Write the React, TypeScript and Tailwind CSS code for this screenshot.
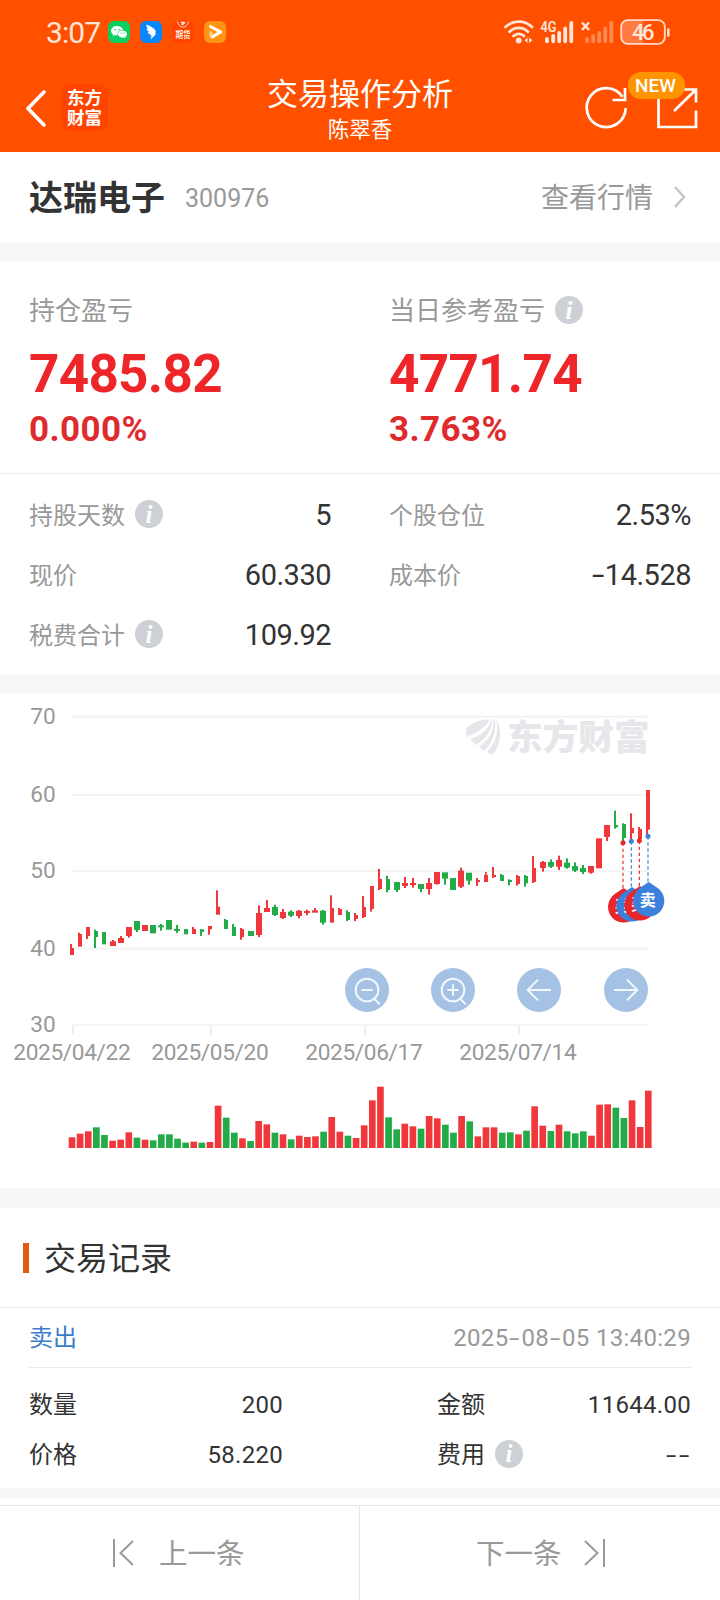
import React from "react";

type Rect = [number, number, number, number];
type Candle = [c: "R" | "G", body: Rect, wick?: Rect];

const RED = "#f0383c";
const GREEN = "#22ab46";

// Candles grouped by chart segment: bodies and wicks are [x1, x2, y1, y2] in third-pixel units.
const segments: { dx: number; dy: number; items: Candle[] }[] = [
  {
    dx: 0,
    dy: 0,
    items: [
      ["R", [210, 222, 774, 795], [210, 216, 762, 780]],
      ["R", [234, 246, 732, 770], [234, 240, 728, 740]],
      ["R", [258, 270, 711, 738], [258, 264, 711, 747]],
      ["G", [282, 294, 723, 741], [282, 288, 719, 774]],
      ["G", [306, 318, 726, 763]],
      ["R", [330, 348, 754, 768], [336, 342, 750, 760]],
      ["R", [354, 372, 744, 759], [360, 366, 738, 750]],
      ["R", [378, 396, 711, 738], [384, 390, 711, 743]],
      ["G", [402, 420, 693, 720], [408, 414, 700, 726]],
      ["R", [426, 444, 705, 723]],
      ["G", [450, 468, 705, 730]],
      ["G", [474, 492, 706, 712], [480, 486, 702, 722]],
      ["G", [498, 516, 690, 719]],
      ["G", [522, 540, 717, 723], [528, 534, 705, 729]],
      ["G", [552, 564, 717, 733]],
      ["R", [576, 588, 717, 732], [576, 582, 711, 720]],
      ["G", [600, 612, 718, 726], [600, 606, 718, 738]],
      ["R", [624, 636, 708, 718], [624, 630, 708, 734]],
      ["R", [648, 660, 650, 674], [648, 654, 601, 660]],
      ["G", [672, 684, 690, 717], [672, 678, 687, 700]],
      ["G", [696, 708, 711, 738], [696, 702, 702, 720]],
      ["R", [720, 732, 717, 741], [720, 726, 714, 749]],
      ["G", [744, 762, 723, 738]],
    ],
  },
  {
    dx: 720,
    dy: 450,
    items: [
      ["R", [48, 66, 219, 285], [54, 60, 196, 291]],
      ["R", [72, 90, 204, 216], [78, 84, 180, 210]],
      ["G", [96, 114, 201, 225], [102, 108, 194, 228]],
      ["R", [120, 138, 216, 234], [126, 132, 207, 237]],
      ["G", [144, 162, 215, 227], [150, 156, 211, 231]],
      ["R", [168, 186, 212, 228], [174, 180, 210, 235]],
      ["R", [192, 210, 213, 219], [198, 204, 209, 226]],
      ["R", [216, 234, 211, 218], [222, 228, 204, 215]],
      ["G", [240, 258, 212, 248], [246, 252, 210, 254]],
      ["R", [270, 282, 204, 248], [270, 276, 166, 210]],
      ["R", [294, 306, 207, 225], [294, 300, 204, 215]],
      ["G", [318, 330, 216, 240], [318, 324, 211, 243]],
      ["R", [342, 354, 225, 237], [342, 348, 219, 243]],
      ["R", [366, 378, 201, 231], [366, 372, 168, 234]],
      ["R", [390, 402, 138, 207], [390, 396, 138, 215]],
      ["R", [414, 426, 117, 147], [414, 420, 87, 150]],
      ["G", [438, 450, 117, 150], [438, 444, 107, 157]],
      ["G", [462, 480, 126, 150], [468, 474, 130, 156]],
      ["R", [486, 504, 129, 138], [492, 498, 111, 144]],
      ["R", [510, 528, 129, 135], [516, 522, 114, 143]],
      ["G", [534, 552, 132, 147], [540, 546, 132, 157]],
      ["R", [558, 576, 129, 147], [564, 570, 114, 164]],
      ["R", [582, 600, 96, 132], [588, 594, 100, 134]],
      ["G", [606, 624, 97, 116], [612, 618, 100, 134]],
      ["G", [630, 648, 114, 150]],
      ["R", [654, 672, 92, 140], [660, 666, 83, 144]],
      ["G", [678, 696, 98, 122], [684, 690, 100, 134]],
      ["R", [708, 720, 120, 126], [708, 714, 114, 138]],
      ["R", [732, 744, 105, 126], [735, 740, 96, 110]],
      ["R", [756, 768, 105, 111], [756, 762, 81, 114]],
    ],
  },
  {
    dx: 1380,
    dy: 0,
    items: [
      ["G", [120, 132, 555, 573], [120, 126, 552, 560]],
      ["G", [144, 156, 570, 576], [144, 150, 568, 586]],
      ["R", [168, 180, 558, 582], [168, 174, 555, 587]],
      ["G", [192, 204, 558, 580], [192, 198, 555, 590]],
      ["R", [216, 228, 534, 576], [216, 222, 498, 579]],
      ["R", [240, 258, 516, 534], [246, 252, 513, 545]],
      ["G", [264, 282, 516, 530], [270, 276, 508, 534]],
      ["R", [288, 306, 510, 530], [294, 300, 497, 540]],
      ["G", [312, 330, 518, 533], [318, 324, 505, 536]],
      ["G", [336, 354, 528, 542], [342, 348, 517, 546]],
      ["G", [360, 378, 534, 546], [366, 372, 525, 552]],
      ["R", [384, 402, 528, 548], [390, 396, 530, 551]],
      ["R", [408, 426, 445, 535]],
      ["R", [432, 450, 405, 441], [438, 444, 410, 453]],
      ["G", [462, 474, 405, 412], [462, 468, 362, 416]],
      ["G", [486, 498, 402, 444], [486, 492, 400, 455]],
      ["R", [510, 522, 414, 430], [510, 516, 370, 452]],
      ["R", [534, 546, 417, 447], [534, 540, 411, 452]],
      ["R", [558, 570, 300, 419], [558, 564, 300, 435]],
    ],
  },
];

const volumes = [
  32, 43, 50, 62, 39, 22, 25, 47, 31, 25, 23, 41, 41, 28, 16, 19, 16, 18, 127, 91, 46, 29, 21, 81, 71, 46, 41, 26, 37,
  33, 35, 49, 93, 49, 37, 30, 68, 143, 184, 92, 56, 73, 65, 58, 96, 89, 70, 46, 96, 80, 35, 62, 62, 46, 47, 41, 52,
  125, 67, 51, 70, 50, 44, 50, 37, 130, 131, 121, 90, 143, 63, 172,
];
const volumeColors = "RRRGGRRRGRGGGGGRGRRGGRGRRGRGRRRGRRGRRRRGGRRGRRGGRGRRRGGRGRRGRGGGRRRGGRRR";

const grid: [number, string][] = [
  [80, "70"],
  [315, "60"],
  [543, "50"],
  [776, "40"],
  [1004, "30"],
];

const dates: [number, string][] = [
  [219, "2025/04/22"],
  [633, "2025/05/20"],
  [1095, "2025/06/17"],
  [1557, "2025/07/14"],
];

const pins: [number, number, number, string, string][] = [
  [1869, 458, 650, "#e9262a", "买"],
  [1894, 454, 647, "#3b80dc", "卖"],
  [1918, 452, 644, "#e9262a", "买"],
  [1944, 439, 632, "#3b80dc", "卖"],
];

function Info({ className = "" }: { className?: string }) {
  return (
    <span
      className={`mt-[-2px] flex h-7 w-7 items-center justify-center rounded-full bg-[#cdd0d5] font-['Liberation_Serif',serif] text-[25px] leading-none font-bold text-white italic ${className}`}
    >
      i
    </span>
  );
}

function Dash() {
  return <span className="mx-[3px] inline-block scale-x-[1.55]">-</span>;
}

function Divider({ className }: { className: string }) {
  return <div className={`shrink-0 bg-[#f7f7f7] ${className}`} />;
}

function StatusBar() {
  return (
    <div className="flex h-[62px] items-start justify-between pr-[50px] pl-[46px] text-[#ffe6d8]">
      <div className="flex items-start">
        <span className="mt-[17px] w-[62px] text-[30px] leading-[32px] tracking-[-0.9px]">3:07</span>
        <div className="mt-[21px] flex gap-[10px]">
          <svg width="22" height="22" viewBox="0 0 22 22">
            <rect width="22" height="22" rx="6" fill="#0fce60" />
            <path d="M9 5c-3.300 0-6 2.100-6 4.800 0 1.500.9 2.800 2.200 3.700L4.800 15.200l2.100-1.100c.6.200 1.300.3 2.100.3h.6C9 11 11.500 8.800 15 8.700 14.300 6.500 11.900 5 9 5z" fill="#fff" />
            <path d="M14.500 9.500c-2.600 0-4.500 1.600-4.500 3.600s2 3.600 4.500 3.600c.6 0 1.100-.1 1.600-.2l1.600.8-.4-1.400c1.100-.7 1.700-1.600 1.700-2.800 0-2-2-3.600-4.500-3.600z" fill="#fff" />
            <g fill="#0fce60">
              <circle cx="7" cy="8.500" r=".8" />
              <circle cx="11" cy="8.500" r=".8" />
              <circle cx="13.200" cy="12" r=".6" />
              <circle cx="16" cy="12" r=".6" />
            </g>
          </svg>
          <svg width="22" height="22" viewBox="0 0 22 22">
            <rect width="22" height="22" rx="6" fill="#0a86fb" />
            <path d="M6.500 3.500c3 1.400 7.500 3 9 6.200.6 1.200.2 2.200-.7 3.300l1.400.1-5.700 5.400 1.200-4h-1.500l.5-1.300c-2-.4-2.700-1.200-3-2.300l1.700.1C7.500 10 6.500 8.800 6.700 7.500l1.500.7C6.800 6.600 6.200 5 6.500 3.500z" fill="#fff" />
          </svg>
          <svg width="22" height="22" viewBox="0 0 22 22">
            <rect width="22" height="22" rx="6" fill="#ff4400" />
            <path d="M5.500 0.500c.6 3.400 2.700 5.600 5.600 5.600S16 3.800 16.500 0.500" fill="none" stroke="#ffd9c8" strokeWidth="1" />
            <path d="M8.500 1.700h4.800M11 0.500v3.500M9.400 3.500l3.200-1.200" stroke="#fff" strokeWidth="1" />
            <text
              transform="translate(11 17.400) scale(1 1.200)"
              textAnchor="middle"
              fontSize="7.600"
              fontWeight="700"
              fill="#ffe9df"
            >
              期货
            </text>
          </svg>
          <svg width="22" height="22" viewBox="0 0 22 22">
            <rect width="22" height="22" rx="6" fill="#ff9416" />
            <path d="M6.500 5.500l10 5.500" stroke="#fff" strokeWidth="3" strokeLinecap="round" />
            <path d="M16.500 11L8 16" stroke="#fff" strokeWidth="3" strokeLinecap="round" />
            <path d="M7 11.500v3" stroke="#ffd39a" strokeWidth="3" strokeLinecap="round" />
          </svg>
        </div>
      </div>
      <svg className="mt-[18px]" width="168" height="28" viewBox="502 18 168 28" fill="none">
        <g stroke="#ffe6d8" strokeWidth="2.800" strokeLinecap="round">
          <path d="M505.500 27a19 19 0 0 1 26.500 0" />
          <path d="M509.500 31.700a13 13 0 0 1 18.500 0" />
          <path d="M513.500 36a7.500 7.500 0 0 1 10.500 0" />
        </g>
        <circle cx="518.700" cy="40.500" r="2.900" fill="#ffe6d8" />
        <path d="M527.500 37.500v5.500l-3-2.800zM529 37.500v5.500l3.500-2.800z" fill="#ffe6d8" />
        <text x="540.500" y="32" fontSize="14" fontWeight="600" fill="#ffe6d8" textLength="16" lengthAdjust="spacingAndGlyphs">
          4G
        </text>
        <g strokeWidth="3.800" strokeLinecap="round" stroke="#ffe6d8">
          <path d="M547 39v2.300M553.200 36v5.300M559.200 33v8.300M565.200 28.500v12.800M571.300 23v18.300" />
        </g>
        <g strokeWidth="3.800" strokeLinecap="round" stroke="#ff8a55">
          <path d="M587 39v2.300M593.200 36v5.300M599.200 33v8.300M605.200 28.500v12.800M611.300 23v18.300" />
        </g>
        <path d="M582 22.500l7 7.500M589 22.500l-7 7.500" stroke="#ffe6d8" strokeWidth="2.500" />
        <path d="M627 21h16v22h-16a5 5 0 0 1-5-5v-12a5 5 0 0 1 5-5z" fill="#ff7a40" />
        <rect x="621.200" y="20.200" width="43.600" height="23.600" rx="6.500" stroke="#ffd9c5" strokeWidth="1.800" />
        <path d="M668.300 29.500v6" stroke="#ffe6d8" strokeWidth="2.400" strokeLinecap="round" />
        <text x="643.300" y="40" fontSize="22" fontWeight="500" textAnchor="middle" fill="#ffe6d8" textLength="22.500">
          46
        </text>
      </svg>
    </div>
  );
}

function NavBar() {
  return (
    <div className="grid h-[90px] grid-cols-[200px_1fr_200px] text-white">
      <div className="flex items-start pt-[22px] pl-[25px]">
        <svg className="mt-[5px] mr-[15px]" width="21" height="38" viewBox="0 0 21 38" fill="none">
          <path d="M19 3L3 19.500L19 36" stroke="#fff" strokeWidth="3.600" strokeLinecap="round" strokeLinejoin="round" />
        </svg>
        <div className="h-[47px] w-[47px] rounded-[10px] bg-[#ff4400] pt-[4px] text-center text-[17.500px] leading-[20px] font-bold">
          <div>东方</div>
          <div>财富</div>
        </div>
      </div>
      <div className="flex flex-col items-center">
        <h1 className="mt-[14px] text-[31px] leading-[38px] font-normal">交易操作分析</h1>
        <p className="mt-[2px] text-[21.500px] leading-[28px]">陈翠香</p>
      </div>
      <div className="relative">
        <svg className="absolute top-0 left-0" width="200" height="90" viewBox="520 62 200 90" fill="none" stroke="#fff" strokeWidth="2.700">
          <path d="M625.700 108a19.500 19.500 0 1 1-3.300-11.300" />
          <path d="M625 88v12h-12.500" />
          <path d="M658.500 90v37h37.500v-16.500M696 102.500v-13h-14M695.500 90l-21.500 21" />
        </svg>
        <span className="absolute top-[10px] left-[108px] flex h-[27px] w-[57px] items-center justify-center rounded-[13px] bg-[#ff9300] pr-[2px] pt-[2px] text-[19px] font-medium">
          NEW
        </span>
      </div>
    </div>
  );
}

function Metric({ label, value, pct, info }: { label: string; value: string; pct: string; info?: boolean }) {
  return (
    <div className="pt-[29px] pl-[29px]">
      <div className="flex h-10 items-center gap-[10px] text-[26px] text-[#999]">
        <span className="leading-none">{label}</span>
        {info && <Info />}
      </div>
      <div className="mt-[13px] text-[53px] leading-[60px] font-bold tracking-[-0.700px] text-[#ee2629]">{value}</div>
      <div className="mt-[4px] text-[35px] leading-[44px] font-bold tracking-[0.400px] text-[#de2c2e]">{pct}</div>
    </div>
  );
}

function Stat({ label, value, info }: { label: string; value: React.ReactNode; info?: boolean }) {
  return (
    <div className="flex h-[60px] items-center justify-between pr-[29px]">
      <div className="flex items-center gap-[10px] text-[24px] text-[#999]">
        <span className="pt-px leading-none">{label}</span>
        {info && <Info />}
      </div>
      <span className="text-[29px] leading-none tracking-[-0.500px] text-[#333]">{value}</span>
    </div>
  );
}

function RecordItem({ label, value, info }: { label: string; value: React.ReactNode; info?: boolean }) {
  return (
    <div className="flex h-[50px] items-center justify-between pt-px text-[24px] leading-none text-[#333]">
      <div className="flex items-center gap-[10px]">
        <span>{label}</span>
        {info && <Info />}
      </div>
      <span className="tracking-[0.300px]">{value}</span>
    </div>
  );
}

function RoundButton({ x, children }: { x: number; children: React.ReactNode }) {
  return (
    <g transform={`translate(${x} 900)`} fill="none" stroke="#f1f8ff" strokeWidth="6">
      <circle r="66" fill="#a5c1e3" stroke="none" />
      {children}
    </g>
  );
}

function Chart() {
  return (
    <svg className="block shrink-0" width="720" height="494" viewBox="0 12 2160 1482">
      {grid.map(([y, label]) => (
        <g key={label}>
          <rect x="216" y={y - 3} width="1728" height="6" fill="#f4f4f4" />
          <text x="167" y={y + 21} fontSize="68" textAnchor="end" fill="#999">
            {label}
          </text>
        </g>
      ))}
      {dates.map(([x, label]) => (
        <g key={label}>
          <rect x={x - 3} y="1007" width="6" height="28" fill="#eee" />
          <text x={x - 3} y="1109" fontSize="68" textAnchor="middle" fill="#999" textLength="352">
            {label}
          </text>
        </g>
      ))}

      <g fill="#e7e7eb">
        <path d="M1398 115C1418 96 1445 89 1470 88C1456 114 1430 128 1400 141z" />
        <path d="M1472 92C1464 122 1440 138 1412 146C1416 154 1420 160 1428 165C1460 146 1474 120 1477 90z" />
        <path d="M1480 90C1482 128 1464 152 1438 169C1442 176 1446 180 1452 183C1480 156 1489 124 1485 89z" />
        <path d="M1489 89C1496 130 1486 160 1460 186L1476 196C1504 165 1508 115 1489 89z" />
        <text x="1521" y="180" fontSize="107" fontWeight="800">
          东方财富
        </text>
      </g>

      {segments.map(({ dx, dy, items }) => (
        <g key={dx} transform={`translate(${dx} ${dy})`}>
          {items.map(([c, b, w], i) => (
            <g key={i} fill={c === "R" ? RED : GREEN}>
              <rect x={b[0]} y={b[2]} width={b[1] - b[0]} height={b[3] - b[2]} />
              {w && <rect x={w[0]} y={w[2]} width={w[1] - w[0]} height={w[3] - w[2]} />}
            </g>
          ))}
        </g>
      ))}

      {volumes.map((h, i) => (
        <rect
          key={i}
          x={206 + i * 24.35}
          y={1374 - h}
          width="20"
          height={h}
          fill={volumeColors[i] === "R" ? RED : GREEN}
        />
      ))}

      {pins.map(([x, top, cy, color, label]) => (
        <g key={x}>
          <path d={`M${x} ${top}V${cy - 50}`} stroke={color} strokeWidth="3.500" strokeDasharray="10 8" />
          <circle cx={x} cy={top} r="7.500" fill={color} />
          <path d={`M${x + 2} ${cy - 56}L${x + 30} ${cy - 37}A47 47 0 1 1 ${x - 26} ${cy - 37}z`} fill={color} />
          <text x={x - 1} y={cy + 17} fontSize="48" fontWeight="700" textAnchor="middle" fill="#fff">
            {label}
          </text>
        </g>
      ))}

      <RoundButton x={1101}>
        <circle r="34" />
        <path d="M-17 0H17M22 26L38 43" />
      </RoundButton>
      <RoundButton x={1359}>
        <circle r="34" />
        <path d="M-17 0H17M0 -17V17M22 26L38 43" />
      </RoundButton>
      <RoundButton x={1617}>
        <path d="M36 0H-32M-3 -31L-34 0L-3 31" />
      </RoundButton>
      <RoundButton x={1878}>
        <path d="M-36 0H32M3 -31L34 0L3 31" />
      </RoundButton>
    </svg>
  );
}

export default function App() {
  return (
    <div className="flex h-[1600px] w-[720px] flex-col overflow-hidden bg-white font-[Roboto,'Noto_Sans_CJK_SC',sans-serif]">
      <header className="h-[152px] shrink-0 bg-[#ff5000]">
        <StatusBar />
        <NavBar />
      </header>

      <section className="flex h-[90px] shrink-0 items-center pr-[34px] pl-[29px]">
        <h2 className="mt-px text-[34px] leading-none font-bold text-[#333]">达瑞电子</h2>
        <span className="mt-[3px] ml-[20px] text-[25px] leading-none text-[#999]">300976</span>
        <span className="mt-[4px] ml-auto text-[28px] leading-none text-[#999]">查看行情</span>
        <svg className="ml-[20px]" width="13" height="24" viewBox="0 0 13 24" fill="none">
          <path d="M2 2L11 12L2 22" stroke="#c4c4c4" strokeWidth="2.400" />
        </svg>
      </section>
      <Divider className="h-5" />

      <section className="grid h-[212px] shrink-0 grid-cols-2 border-b border-[#ebebeb]">
        <Metric label="持仓盈亏" value="7485.82" pct="0.000%" />
        <Metric label="当日参考盈亏" value="4771.74" pct="3.763%" info />
      </section>
      <section className="grid h-[200px] shrink-0 grid-cols-2 content-start gap-x-[29px] pt-[11px] pl-[29px]">
        <Stat label="持股天数" value="5" info />
        <Stat label="个股仓位" value="2.53%" />
        <Stat label="现价" value="60.330" />
        <Stat
          label="成本价"
          value={
            <>
              <Dash />
              14.528
            </>
          }
        />
        <Stat label="税费合计" value="109.92" info />
      </section>
      <Divider className="h-5" />

      <Chart />
      <Divider className="h-5" />

      <section className="shrink-0">
        <div className="flex h-[100px] items-center border-b border-[#ebebeb] pl-[23px]">
          <span className="h-[30px] w-[6px] bg-[#e05a12]" />
          <h2 className="mt-[3px] ml-[15px] text-[32px] leading-none text-[#333]">交易记录</h2>
        </div>
        <div className="mx-[29px] flex h-[60px] items-center justify-between border-b border-[#ebebeb] pt-px text-[24px] leading-none">
          <span className="text-[#3a7dc9]">卖出</span>
          <span className="tracking-[0.320px] text-[#999]">
            2025
            <Dash />
            08
            <Dash />
            05 13:40:29
          </span>
        </div>
        <div className="grid h-[120px] grid-cols-2 content-start gap-x-[154px] px-[29px] pt-[11px]">
          <RecordItem label="数量" value="200" />
          <RecordItem label="金额" value="11644.00" />
          <RecordItem label="价格" value="58.220" />
          <RecordItem
            label="费用"
            value={
              <>
                <Dash />
                <Dash />
              </>
            }
            info
          />
        </div>
      </section>
      <Divider className="h-[10px]" />

      <nav className="mt-[7px] grid h-[95px] shrink-0 grid-cols-2 border-t border-[#e8e8e8] text-[28.500px] leading-none text-[#999]">
        <div className="flex items-center border-r border-[#e8e8e8] pl-[112px]">
          <svg width="23" height="28" viewBox="0 0 23 28" fill="none" stroke="#999" strokeWidth="2">
            <path d="M2 0V28M21 2L8.500 14L21 26" />
          </svg>
          <span className="mt-[4px] ml-[24px]">上一条</span>
        </div>
        <div className="flex items-center pl-[116px]">
          <span className="mt-[4px]">下一条</span>
          <svg className="ml-[21px]" width="23" height="28" viewBox="0 0 23 28" fill="none" stroke="#999" strokeWidth="2">
            <path d="M21 0V28M2 2L14.500 14L2 26" />
          </svg>
        </div>
      </nav>
    </div>
  );
}
